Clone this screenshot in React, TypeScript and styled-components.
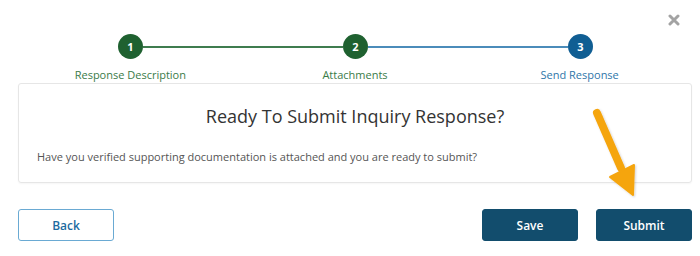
import styled, { createGlobalStyle } from "styled-components";

const GlobalStyle = createGlobalStyle`
  body {
    margin: 0;
    background: #ffffff;
    font-family: "Open Sans", "Liberation Sans", sans-serif;
  }
`;

const Page = styled.div`
  position: relative;
  width: 700px;
  height: 256px;
  overflow: hidden;
  background: #fff;
`;

const Content = styled.div`
  width: 674px;
  margin-left: 18px;
  padding-top: 34px;
`;

const CloseButton = styled.button`
  position: absolute;
  top: 13px;
  right: 19px;
  width: 14px;
  height: 14px;
  padding: 0;
  border: none;
  background: none;
  cursor: pointer;
  display: flex;
  align-items: center;
  justify-content: center;
`;

const Track = styled.div`
  display: flex;
  align-items: center;
  margin: 0 99px 0 100px;
`;

const Circle = styled.div<{ $color: string }>`
  width: 25px;
  height: 25px;
  flex: none;
  border-radius: 50%;
  background: ${(p) => p.$color};
  color: #fff;
  font-size: 11px;
  font-weight: 700;
  display: flex;
  align-items: center;
  justify-content: center;
`;

const Connector = styled.div<{ $color: string }>`
  flex: 1;
  height: 2px;
  background: ${(p) => p.$color};
`;

const Labels = styled.div`
  display: grid;
  grid-template-columns: repeat(3, 1fr);
  margin-top: 8px;
`;

const Label = styled.div<{ $color: string }>`
  text-align: center;
  font-size: 11px;
  line-height: 16px;
  color: ${(p) => p.$color};
`;

const Card = styled.div`
  margin-top: 0;
  border: 1px solid #e6e6e6;
  border-radius: 3px;
  box-shadow: 0 1px 2px rgba(0, 0, 0, 0.04);
  padding: 20px 18px 17px;
`;

const Title = styled.h2`
  margin: 0;
  text-align: center;
  font-size: 18px;
  line-height: 24px;
  font-weight: 400;
  color: #333;
`;

const Message = styled.p`
  margin: 21px 0 0;
  font-size: 11px;
  line-height: 16px;
  color: #555;
`;

const Actions = styled.div`
  display: flex;
  align-items: center;
  gap: 18px;
  margin-top: 26px;
`;

const Spacer = styled.div`
  flex: 1;
`;

const Button = styled.button<{ $variant: "outline" | "primary" }>`
  width: 96px;
  height: 32px;
  border-radius: 3px;
  font-family: "Open Sans", "Liberation Sans", sans-serif;
  font-size: 12px;
  font-weight: 600;
  cursor: pointer;
  border: 1px solid ${(p) => (p.$variant === "primary" ? "#124d6d" : "#6aaad3")};
  background: ${(p) => (p.$variant === "primary" ? "#124d6d" : "#fff")};
  color: ${(p) => (p.$variant === "primary" ? "#fff" : "#1c6ba0")};
`;

const Pointer = styled.svg`
  position: absolute;
  left: 588px;
  top: 106px;
  pointer-events: none;
`;

const GREEN = "#1f6130";
const BLUE = "#105e93";

export default function App() {
  return (
    <Page>
      <GlobalStyle />
      <CloseButton aria-label="Close">
        <svg width="12" height="12" viewBox="0 0 12 12">
          <path d="M2 2 L10 10 M10 2 L2 10" stroke="#a3a3a3" strokeWidth="3" strokeLinecap="round" />
        </svg>
      </CloseButton>
      <Content>
        <Track>
          <Circle $color={GREEN}>1</Circle>
          <Connector $color="#3f7c4f" />
          <Circle $color={GREEN}>2</Circle>
          <Connector $color="#4b8cba" />
          <Circle $color={BLUE}>3</Circle>
        </Track>
        <Labels>
          <Label $color="#3a7b48">Response Description</Label>
          <Label $color="#3a7b48">Attachments</Label>
          <Label $color="#2f76a9">Send Response</Label>
        </Labels>
        <Card>
          <Title>Ready To Submit Inquiry Response?</Title>
          <Message>
            Have you verified supporting documentation is attached and you are ready to submit?
          </Message>
        </Card>
        <Actions>
          <Button $variant="outline">Back</Button>
          <Spacer />
          <Button $variant="primary">Save</Button>
          <Button $variant="primary">Submit</Button>
        </Actions>
      </Content>
      <Pointer width="56" height="96" viewBox="0 0 56 96">
        <defs>
          <filter id="sh" x="-30%" y="-30%" width="160%" height="160%">
            <feDropShadow dx="1" dy="1" stdDeviation="1" floodColor="#000" floodOpacity="0.18" />
          </filter>
        </defs>
        <g filter="url(#sh)">
          <path d="M9 7 L33 62" stroke="#f5a511" strokeWidth="8" strokeLinecap="round" />
          <path d="M22 71 L46 59 L45 89 Z" fill="#f5a511" stroke="#f5a511" strokeWidth="2" strokeLinejoin="round" />
        </g>
      </Pointer>
    </Page>
  );
}
